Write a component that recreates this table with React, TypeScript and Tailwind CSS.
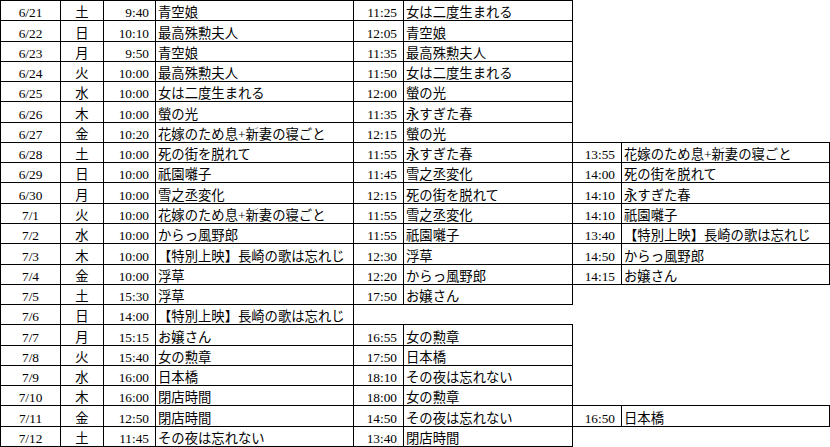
import React from "react";

type Show = [string, string];
type Row = { d: string; w: string; shows: Show[] };

const rows: Row[] = [
  { d: "6/21", w: "土", shows: [["9:40", "青空娘"], ["11:25", "女は二度生まれる"]] },
  { d: "6/22", w: "日", shows: [["10:10", "最高殊勲夫人"], ["12:05", "青空娘"]] },
  { d: "6/23", w: "月", shows: [["9:50", "青空娘"], ["11:35", "最高殊勲夫人"]] },
  { d: "6/24", w: "火", shows: [["10:00", "最高殊勲夫人"], ["11:50", "女は二度生まれる"]] },
  { d: "6/25", w: "水", shows: [["10:00", "女は二度生まれる"], ["12:00", "螢の光"]] },
  { d: "6/26", w: "木", shows: [["10:00", "螢の光"], ["11:35", "永すぎた春"]] },
  { d: "6/27", w: "金", shows: [["10:20", "花嫁のため息+新妻の寝ごと"], ["12:15", "螢の光"]] },
  { d: "6/28", w: "土", shows: [["10:00", "死の街を脱れて"], ["11:55", "永すぎた春"], ["13:55", "花嫁のため息+新妻の寝ごと"]] },
  { d: "6/29", w: "日", shows: [["10:00", "祇園囃子"], ["11:45", "雪之丞変化"], ["14:00", "死の街を脱れて"]] },
  { d: "6/30", w: "月", shows: [["10:00", "雪之丞変化"], ["12:15", "死の街を脱れて"], ["14:10", "永すぎた春"]] },
  { d: "7/1", w: "火", shows: [["10:00", "花嫁のため息+新妻の寝ごと"], ["11:55", "雪之丞変化"], ["14:10", "祇園囃子"]] },
  { d: "7/2", w: "水", shows: [["10:00", "からっ風野郎"], ["11:55", "祇園囃子"], ["13:40", "【特別上映】長崎の歌は忘れじ"]] },
  { d: "7/3", w: "木", shows: [["10:00", "【特別上映】長崎の歌は忘れじ"], ["12:30", "浮草"], ["14:50", "からっ風野郎"]] },
  { d: "7/4", w: "金", shows: [["10:00", "浮草"], ["12:20", "からっ風野郎"], ["14:15", "お嬢さん"]] },
  { d: "7/5", w: "土", shows: [["15:30", "浮草"], ["17:50", "お嬢さん"]] },
  { d: "7/6", w: "日", shows: [["14:00", "【特別上映】長崎の歌は忘れじ"]] },
  { d: "7/7", w: "月", shows: [["15:15", "お嬢さん"], ["16:55", "女の勲章"]] },
  { d: "7/8", w: "火", shows: [["15:40", "女の勲章"], ["17:50", "日本橋"]] },
  { d: "7/9", w: "水", shows: [["16:00", "日本橋"], ["18:10", "その夜は忘れない"]] },
  { d: "7/10", w: "木", shows: [["16:00", "閉店時間"], ["18:00", "女の勲章"]] },
  { d: "7/11", w: "金", shows: [["12:50", "閉店時間"], ["14:50", "その夜は忘れない"], ["16:50", "日本橋"]] },
  { d: "7/12", w: "土", shows: [["11:45", "その夜は忘れない"], ["13:40", "閉店時間"]] },
];

const cell = "flex items-end leading-[14px] whitespace-nowrap overflow-hidden shadow-[0_0_0_1px_#000]";

export default function App() {
  return (
    <div
      className="w-[830px] h-[447px] bg-white text-black text-[13.33px]"
      style={{ fontFamily: '"Liberation Serif", "Noto Sans CJK JP", serif' }}
    >
      <div className="grid p-px gap-px grid-cols-[59px_42px_51px_197px_49px_168px_48px_207px] grid-rows-[19px_20px_19px_19px_19px_20px_19px_19px_19px_20px_19px_19px_20px_19px_19px_19px_20px_19px_19px_19px_20px_19px]">
        {rows.map((r) => {
          const cells: React.ReactNode[] = [
            <div key={r.d + "d"} className={cell + " justify-center"}>{r.d}</div>,
            <div key={r.d + "w"} className={cell + " justify-center"}>{r.w}</div>,
          ];
          for (let i = 0; i < 3; i++) {
            const s = r.shows[i];
            if (s) {
              cells.push(
                <div key={r.d + "t" + i} className={cell + " justify-end pr-[6px]"}>{s[0]}</div>,
                <div key={r.d + "n" + i} className={cell + " justify-start pl-[2px]"}>{s[1]}</div>
              );
            } else {
              cells.push(<div key={r.d + "t" + i} />, <div key={r.d + "n" + i} />);
            }
          }
          return cells;
        })}
      </div>
    </div>
  );
}
